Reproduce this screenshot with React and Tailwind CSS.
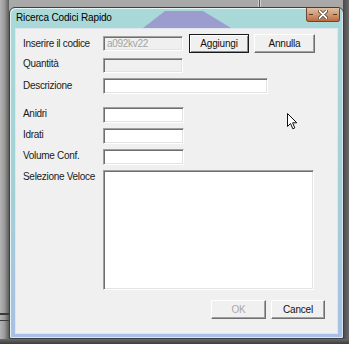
import React from 'react';

const FONT = { fontFamily: '"Liberation Sans", Arial, sans-serif' };

const sunken =
  'border border-t-[#a0a0a0] border-l-[#a0a0a0] border-r-white border-b-white shadow-[inset_1px_1px_0_#6f6f6f,inset_-1px_-1px_0_#e3e3e3]';

function Field({ w = 'w-[81px]', h = 'h-[16px]', disabled, value }) {
  return (
    <div
      className={`${w} ${h} ${sunken} ${disabled ? 'bg-[#f0f0f0] text-[#a3a3a3]' : 'bg-white'} flex items-center pl-[3px] text-[10px] tracking-[-0.3px] leading-none`}
    >
      {value}
    </div>
  );
}

function Btn({ children, w, def, disabled }) {
  const base = def
    ? 'border border-[#1a1a1a] shadow-[inset_1px_1px_0_#ffffff,inset_-1px_-1px_0_#8a8a8a]'
    : 'border border-t-white border-l-white border-r-[#6f6f6f] border-b-[#6f6f6f] shadow-[inset_-1px_-1px_0_#a0a0a0]';
  return (
    <div
      className={`${w} h-[19px] ${base} bg-[#f0f0f0] flex items-center justify-center text-[10px] tracking-[-0.2px] leading-none ${disabled ? 'text-[#a8a8a8]' : 'text-[#111]'}`}
    >
      {children}
    </div>
  );
}

function Row({ label, children, className = '', shift = true }) {
  return (
    <div className={`flex items-center ${className}`}>
      <div className={`w-[80px] shrink-0 whitespace-nowrap text-[10px] tracking-[-0.3px] leading-none text-[#1a1a1a] ${shift ? 'mb-[3px]' : ''}`}>{label}</div>
      {children}
    </div>
  );
}

export default function App() {
  return (
    <div
      className="relative w-[349px] h-[344px] overflow-hidden bg-gradient-to-b from-[#a9a9a9] via-[#8e8e8e] to-[#5e5e5e]"
      style={FONT}
    >
      {/* background window edges */}
      <div className="absolute left-0 top-0 w-[9px] h-full bg-gradient-to-r from-[#b4b4b4] via-[#9a9a9a] to-[#5c5c5c]" />
      <div className="absolute left-[258px] top-0 w-[3px] h-[8px] bg-[#5a5a5a] border-x border-[#d0d0d0]" />
      <div className="absolute left-0 top-[313px] w-[9px] h-[2px] bg-[#3a3a3a]" />
      <div className="absolute left-0 top-[320px] w-[9px] h-[1px] bg-[#3a3a3a]" />
      <div className="absolute left-[343px] top-0 w-[6px] h-full bg-gradient-to-r from-[#4a4a4a] to-[#6a6a6a]" />
      <div className="absolute left-0 top-[339px] w-full h-[5px] bg-gradient-to-b from-[#6a6a6a] to-[#3c3c3c]" />

      <div className="pt-[7px] pl-[9px]">
        <div className="relative w-[335px] h-[332px] rounded-t-[6px] rounded-b-[2px] border border-[#3f3f3f] bg-gradient-to-b from-[#a9d9d8] via-[#a2d2d4] to-[#a8bfe6] flex flex-col overflow-hidden shadow-[inset_1px_1px_0_#e6f4f4,inset_-1px_-1px_0_#d8e4f4]">
          <svg className="absolute left-[133px] top-[2px]" width="90" height="18" viewBox="0 0 90 18">
            <polygon points="22,1 60,1 88,18 0,18" fill="#9d9ccf" />
          </svg>

          <div className="relative h-[20px] flex items-start shrink-0">
            <div className="pl-[6px] pt-[5px] text-[10px] tracking-[-0.15px] leading-none text-black">Ricerca Codici Rapido</div>
            <div className="ml-auto mr-[3px] w-[34px] h-[14px] rounded-b-[3px] border border-t-0 border-[#6b4634] bg-gradient-to-b from-[#e2bda0] via-[#cf9a76] to-[#c0683f] flex items-center justify-center relative">
              <div className="absolute left-[2px] top-[6px] w-[4px] h-[1px] bg-[#5a3a2a]" />
              <div className="absolute right-[2px] top-[6px] w-[4px] h-[1px] bg-[#5a3a2a]" />
              <svg width="10" height="9" viewBox="0 0 10 9">
                <path d="M1.5 1 L8.5 8 M8.5 1 L1.5 8" stroke="#3a2a22" strokeWidth="3.2" strokeLinecap="round" />
                <path d="M1.5 1 L8.5 8 M8.5 1 L1.5 8" stroke="#ffffff" strokeWidth="1.8" strokeLinecap="round" />
              </svg>
            </div>
          </div>

          <div className="mx-[5px] mb-[4px] flex-1 border border-[#dfe6ee] bg-[#f0f0f0] pl-[7px] pr-[12px] pt-[5px] flex flex-col">
            <Row label="Inserire il codice" shift={false}>
              <Field w="w-[80px]" h="h-[15px]" disabled value="a092kv22" />
              <div className="ml-[6px]"><Btn w="w-[60px]" def>Aggiungi</Btn></div>
              <div className="ml-[5px]"><Btn w="w-[61px]">Annulla</Btn></div>
            </Row>
            <Row label="Quantità" className="mt-[5px]">
              <Field w="w-[80px]" h="h-[15px]" disabled />
            </Row>
            <Row label="Descrizione" className="mt-[5px]" shift={false}>
              <Field w="w-[165px]" />
            </Row>
            <Row label="Anidri" className="mt-[13px]">
              <Field />
            </Row>
            <Row label="Idrati" className="mt-[5px]">
              <Field />
            </Row>
            <Row label="Volume Conf." className="mt-[5px]">
              <Field />
            </Row>
            <div className="flex items-start mt-[5px]">
              <div className="w-[80px] shrink-0 whitespace-nowrap pt-[2px] text-[10px] tracking-[-0.3px] leading-none text-[#1a1a1a]">Selezione Veloce</div>
              <div className={`w-[211px] h-[120px] bg-white ${sunken}`} />
            </div>
            <div className="mt-[10px] flex justify-end gap-[5px]">
              <Btn w="w-[55px]" disabled>OK</Btn>
              <Btn w="w-[54px]">Cancel</Btn>
            </div>
          </div>
        </div>
      </div>

      {/* mouse cursor */}
      <svg className="absolute left-[287px] top-[113px]" width="12" height="17" viewBox="0 0 12 17">
        <path d="M0.5 0.5 L0.5 13.5 L3.5 10.5 L5.8 15.8 L7.8 14.9 L5.6 9.8 L9.8 9.8 Z" fill="#ffffff" stroke="#111111" strokeWidth="1" strokeLinejoin="miter" />
      </svg>
    </div>
  );
}
